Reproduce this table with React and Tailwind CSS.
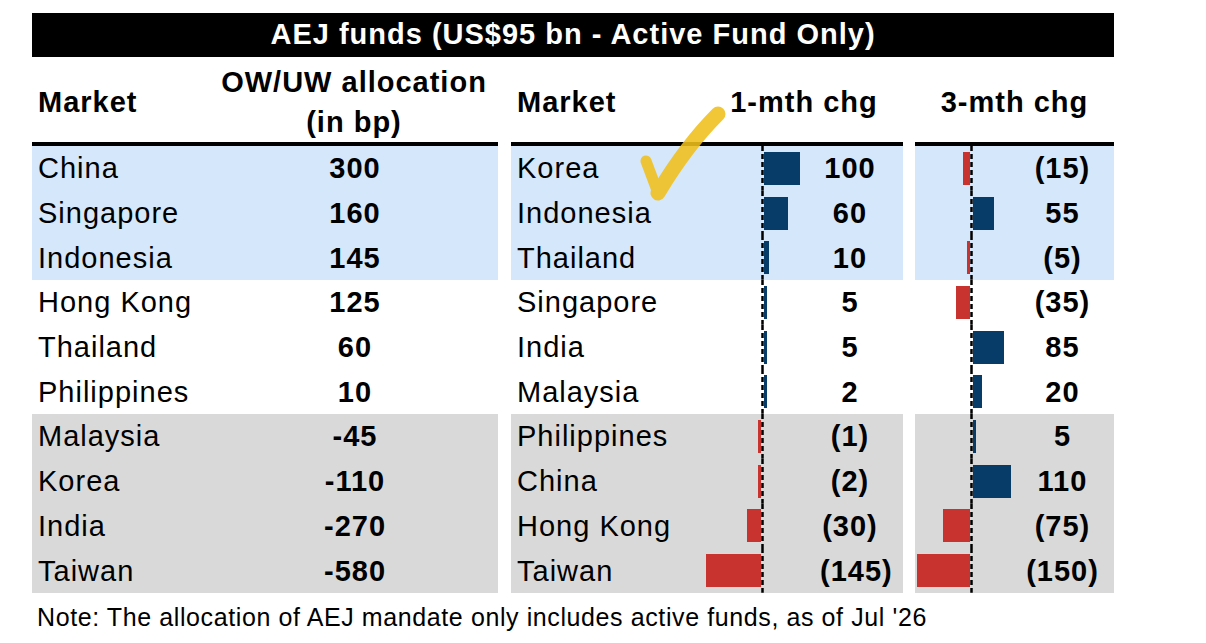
import React from "react";

const font = { fontFamily: '"Liberation Sans", Arial, sans-serif' };

const bands = [
  "bg-[#d5e7fa]",
  "bg-[#d5e7fa]",
  "bg-[#d5e7fa]",
  "bg-white",
  "bg-white",
  "bg-white",
  "bg-[#d9d9d9]",
  "bg-[#d9d9d9]",
  "bg-[#d9d9d9]",
  "bg-[#d9d9d9]",
];

const allocation = [
  { market: "China", value: "300" },
  { market: "Singapore", value: "160" },
  { market: "Indonesia", value: "145" },
  { market: "Hong Kong", value: "125" },
  { market: "Thailand", value: "60" },
  { market: "Philippines", value: "10" },
  { market: "Malaysia", value: "-45" },
  { market: "Korea", value: "-110" },
  { market: "India", value: "-270" },
  { market: "Taiwan", value: "-580" },
];

// bar is width in px, negative goes left of the axis
const oneMonth = [
  { market: "Korea", label: "100", bar: 36 },
  { market: "Indonesia", label: "60", bar: 24 },
  { market: "Thailand", label: "10", bar: 5 },
  { market: "Singapore", label: "5", bar: 3 },
  { market: "India", label: "5", bar: 3 },
  { market: "Malaysia", label: "2", bar: 3 },
  { market: "Philippines", label: "(1)", bar: -3 },
  { market: "China", label: "(2)", bar: -3 },
  { market: "Hong Kong", label: "(30)", bar: -14 },
  { market: "Taiwan", label: "(145)", bar: -55 },
];

const threeMonth = [
  { label: "(15)", bar: -7 },
  { label: "55", bar: 21 },
  { label: "(5)", bar: -3 },
  { label: "(35)", bar: -14 },
  { label: "85", bar: 31 },
  { label: "20", bar: 9 },
  { label: "5", bar: 3 },
  { label: "110", bar: 38 },
  { label: "(75)", bar: -27 },
  { label: "(150)", bar: -53 },
];

const Axis = () => (
  <svg className="h-full w-[3px] shrink-0" preserveAspectRatio="none">
    <line
      x1="1.5"
      y1="0"
      x2="1.5"
      y2="100%"
      stroke="#000"
      strokeWidth="2.5"
      strokeDasharray="5 3"
    />
  </svg>
);

const BarCell = ({ bar, neg, pos }) => (
  <div className="flex h-full shrink-0 items-center">
    <div className="flex shrink-0 justify-end" style={{ width: neg }}>
      {bar < 0 && (
        <div className="h-[33px] bg-[#c8322f]" style={{ width: -bar }} />
      )}
    </div>
    <Axis />
    <div className="flex shrink-0" style={{ width: pos }}>
      {bar > 0 && (
        <div className="h-[33px] bg-[#073c69]" style={{ width: bar }} />
      )}
    </div>
  </div>
);

const App = () => {
  return (
    <div
      className="relative h-[643px] w-[1206px] bg-white pl-[32px] pt-[13px] text-black"
      style={font}
    >
      {/* Title bar */}
      <div className="flex h-[44px] w-[1082px] items-center justify-center bg-black text-[29px] font-bold tracking-[1px] text-white">
        AEJ funds (US$95 bn - Active Fund Only)
      </div>

      <div className="flex text-[29px] leading-[32px] tracking-[1px]">
        {/* Left - allocation */}
        <div className="w-[466px]">
          <div className="flex h-[85px] items-center pt-[4px] font-bold">
            <div className="w-[187px] pl-[6px]">Market</div>
            <div className="w-[270px] whitespace-nowrap text-center leading-[40px]">
              OW/UW allocation
              <br />
              (in bp)
            </div>
          </div>
          <div className="border-t-4 border-black">
            {allocation.map((row, i) => (
              <div
                key={row.market}
                className={`flex h-[44.7px] items-center ${bands[i]}`}
              >
                <div className="w-[220px] pl-[6px]">{row.market}</div>
                <div className="w-[206px] text-center font-bold">
                  {row.value}
                </div>
              </div>
            ))}
          </div>
        </div>

        {/* Middle - 1-mth chg */}
        <div className="ml-[13px] w-[392px]">
          <div className="flex h-[85px] items-center pt-[4px] font-bold">
            <div className="w-[209px] pl-[6px]">Market</div>
            <div className="w-[168px] whitespace-nowrap text-center">
              1-mth chg
            </div>
          </div>
          <div className="border-t-4 border-black">
            {oneMonth.map((row, i) => (
              <div
                key={row.market}
                className={`flex h-[44.7px] items-center ${bands[i]}`}
              >
                <div className="w-[189px] shrink-0 pl-[6px]">{row.market}</div>
                <BarCell bar={row.bar} neg={61} pos={56} />
                <div className="w-[60px] shrink-0 whitespace-nowrap text-center font-bold">
                  {row.label}
                </div>
              </div>
            ))}
          </div>
        </div>

        {/* Right - 3-mth chg */}
        <div className="ml-[12px] w-[199px]">
          <div className="flex h-[85px] items-center justify-center pt-[4px] font-bold">
            3-mth chg
          </div>
          <div className="border-t-4 border-black">
            {threeMonth.map((row, i) => (
              <div
                key={i}
                className={`flex h-[44.7px] items-center ${bands[i]}`}
              >
                <BarCell bar={row.bar} neg={55} pos={52} />
                <div className="w-[75px] shrink-0 whitespace-nowrap text-center font-bold">
                  {row.label}
                </div>
              </div>
            ))}
          </div>
        </div>
      </div>

      {/* Footnote */}
      <p className="mt-[10px] pl-[5px] text-[25px] leading-[28px] tracking-[0.6px]">
        Note: The allocation of AEJ mandate only includes active funds, as of
        Jul '26
      </p>

      {/* Hand-drawn tick */}
      <svg
        className="pointer-events-none absolute left-[636px] top-[104px]"
        width="95"
        height="100"
        viewBox="0 0 95 100"
      >
        <g opacity="0.88" strokeLinecap="round" strokeLinejoin="round" fill="none">
          <path d="M10 57 L22 89" stroke="#f0c01c" strokeWidth="11" />
          <path d="M22 89 Q50 42 82 10" stroke="#f0c01c" strokeWidth="15" />
        </g>
      </svg>
    </div>
  );
};

export default App;
